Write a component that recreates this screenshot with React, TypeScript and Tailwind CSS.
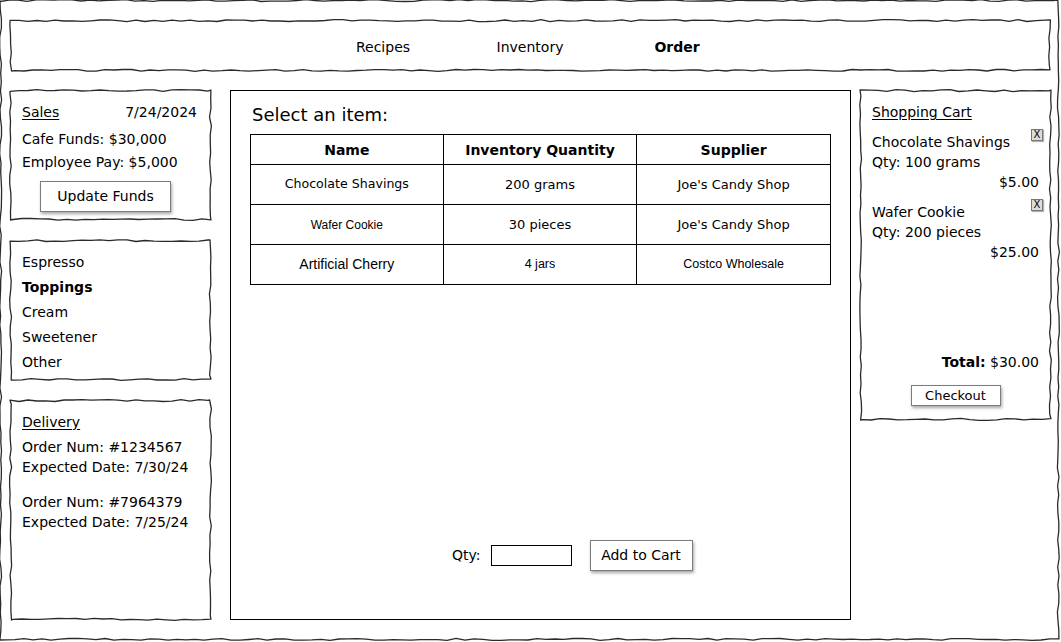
import type { ReactNode } from "react";

// rough hand-drawn outline, drawn over a box of known size
function wobblePath(w: number, h: number, seed: number) {
  let s = seed * 7919 + 13;
  const rnd = () => {
    s = (s * 9301 + 49297) % 233280;
    return s / 233280;
  };
  const j = () => (rnd() - 0.5) * 2;
  const step = 9;
  const pts: string[] = [];
  for (let x = 0; x < w; x += step) pts.push(`${x.toFixed(1)},${(0.6 + j()).toFixed(1)}`);
  for (let y = 0; y < h; y += step) pts.push(`${(w - 0.6 + j()).toFixed(1)},${y.toFixed(1)}`);
  for (let x = w; x > 0; x -= step) pts.push(`${x.toFixed(1)},${(h - 0.6 + j()).toFixed(1)}`);
  for (let y = h; y > 0; y -= step) pts.push(`${(0.6 + j()).toFixed(1)},${y.toFixed(1)}`);
  return "M" + pts.join(" L") + " Z";
}

function Sketch({
  w,
  h,
  seed = 1,
  className = "",
  children,
}: {
  w: number;
  h: number;
  seed?: number;
  className?: string;
  children?: ReactNode;
}) {
  return (
    <div className={`relative shrink-0 ${className}`} style={{ width: w, height: h }}>
      <svg
        className="pointer-events-none absolute inset-0 overflow-visible"
        width={w}
        height={h}
        viewBox={`0 0 ${w} ${h}`}
        fill="none"
      >
        <path d={wobblePath(w, h, seed)} stroke="#2a2a2a" strokeWidth={1.3} strokeLinejoin="round" />
      </svg>
      {children}
    </div>
  );
}

function Btn({ children, className = "" }: { children: ReactNode; className?: string }) {
  return (
    <button
      type="button"
      className={`flex items-center justify-center border border-[#7c7c7c] bg-white text-black shadow-[1px_2px_3px_rgba(0,0,0,0.35)] ${className}`}
    >
      {children}
    </button>
  );
}

function CloseX() {
  return (
    <span className="absolute right-[-4px] top-[-3px] flex h-[12px] w-[12px] items-center justify-center border border-[#777] bg-[#dcdcdc] text-[10px] leading-none text-black shadow-[1px_1px_1px_rgba(0,0,0,0.3)]">
      X
    </span>
  );
}

const arial = "font-['Liberation_Sans',Arial,sans-serif]";

const rows = [
  { name: "Chocolate Shavings", nameCls: "text-[12.6px]", qty: "200 grams", qtyCls: "text-[13px]", sup: "Joe's Candy Shop", supCls: "text-[13px]" },
  { name: "Wafer Cookie", nameCls: `${arial} text-[12px]`, qty: "30 pieces", qtyCls: "text-[13px]", sup: "Joe's Candy Shop", supCls: "text-[13px]" },
  { name: "Artificial Cherry", nameCls: `${arial} text-[14px]`, qty: "4 jars", qtyCls: `${arial} text-[12.5px]`, sup: "Costco Wholesale", supCls: `${arial} text-[12.5px]` },
];

export default function App() {
  return (
    <div className="relative h-[642px] w-[1061px] overflow-hidden bg-white font-['DejaVu_Sans',Verdana,sans-serif] text-[14px] text-black">
      <div className="absolute left-0 top-0">
        <Sketch w={1059} h={640} seed={3} />
      </div>

      <div className="relative flex flex-col pl-[10px] pt-[20px]">
        {/* nav */}
        <Sketch w={1040} h={51} seed={5} className="flex items-center justify-center pt-[4px]">
          <span className="w-[147px] text-center">Recipes</span>
          <span className="w-[147px] text-center">Inventory</span>
          <span className="w-[147px] text-center font-bold">Order</span>
        </Sketch>

        <div className="mt-[19px] flex items-start">
          {/* left column */}
          <div className="flex w-[201px] flex-col gap-[20px]">
            <Sketch w={201} h={130} seed={7} className="flex flex-col px-[12px] pt-[12px]">
              <div className="flex h-[20px] items-center justify-between leading-[20px]">
                <span className="underline underline-offset-2">Sales</span>
                <span className="pr-[2px]">7/24/2024</span>
              </div>
              <div className="mt-[6px] leading-[23px]">
                <div>Cafe Funds: $30,000</div>
                <div>Employee Pay: $5,000</div>
              </div>
              <Btn className="ml-[18px] mt-[7px] h-[31px] w-[131px]">Update Funds</Btn>
            </Sketch>

            <Sketch w={201} h={140} seed={11} className="flex flex-col px-[12px] pt-[10px] leading-[25px]">
              <span>Espresso</span>
              <span className="font-bold">Toppings</span>
              <span>Cream</span>
              <span>Sweetener</span>
              <span>Other</span>
            </Sketch>

            <Sketch w={201} h={220} seed={13} className="flex flex-col px-[12px] pt-[12px] leading-[20px]">
              <span className="underline underline-offset-2">Delivery</span>
              <div className="mt-[5px]">
                <div>Order Num: #1234567</div>
                <div>Expected Date: 7/30/24</div>
              </div>
              <div className="mt-[15px]">
                <div>Order Num: #7964379</div>
                <div>Expected Date: 7/25/24</div>
              </div>
            </Sketch>
          </div>

          {/* center */}
          <div className="ml-[19px] flex h-[530px] w-[621px] flex-col border border-black pl-[19px] pt-[12px]">
            <div className="ml-[2px] text-[18px] leading-[24px]">Select an item:</div>
            <table className="mt-[7px] w-[581px] border-collapse text-center">
              <thead>
                <tr className="h-[30px]">
                  <th className="w-[193px] border border-black pt-[2px] text-[14px] font-bold">Name</th>
                  <th className="w-[194px] border border-black pt-[2px] text-[14px] font-bold">Inventory Quantity</th>
                  <th className="w-[194px] border border-black pt-[2px] text-[14px] font-bold">Supplier</th>
                </tr>
              </thead>
              <tbody>
                {rows.map((r) => (
                  <tr key={r.name} className="h-[40px]">
                    <td className={`border border-black ${r.nameCls}`}>{r.name}</td>
                    <td className={`border border-black ${r.qtyCls}`}>{r.qty}</td>
                    <td className={`border border-black ${r.supCls}`}>{r.sup}</td>
                  </tr>
                ))}
              </tbody>
            </table>
            <div className="flex-1" />
            <div className="mb-[48px] ml-[202px] flex items-center">
              <span>Qty:</span>
              <span className="ml-[10px] h-[21px] w-[81px] border border-black" />
              <Btn className="ml-[18px] h-[31px] w-[103px]">Add to Cart</Btn>
            </div>
          </div>

          {/* cart */}
          <Sketch w={191} h={330} seed={17} className="ml-[9px] flex flex-col px-[12px] pt-[12px] leading-[20px]">
            <span className="underline underline-offset-2">Shopping Cart</span>
            <div className="relative mt-[10px]">
              <div>Chocolate Shavings</div>
              <div>Qty: 100 grams</div>
              <div className="text-right">$5.00</div>
              <CloseX />
            </div>
            <div className="relative mt-[10px]">
              <div>Wafer Cookie</div>
              <div>Qty: 200 pieces</div>
              <div className="text-right">$25.00</div>
              <CloseX />
            </div>
            <div className="flex-1" />
            <div className="text-right">
              <span className="font-bold">Total:</span> $30.00
            </div>
            <Btn className="mx-auto mb-[14px] mt-[13px] h-[21px] w-[90px] text-[13px]">Checkout</Btn>
          </Sketch>
        </div>
      </div>
    </div>
  );
}
